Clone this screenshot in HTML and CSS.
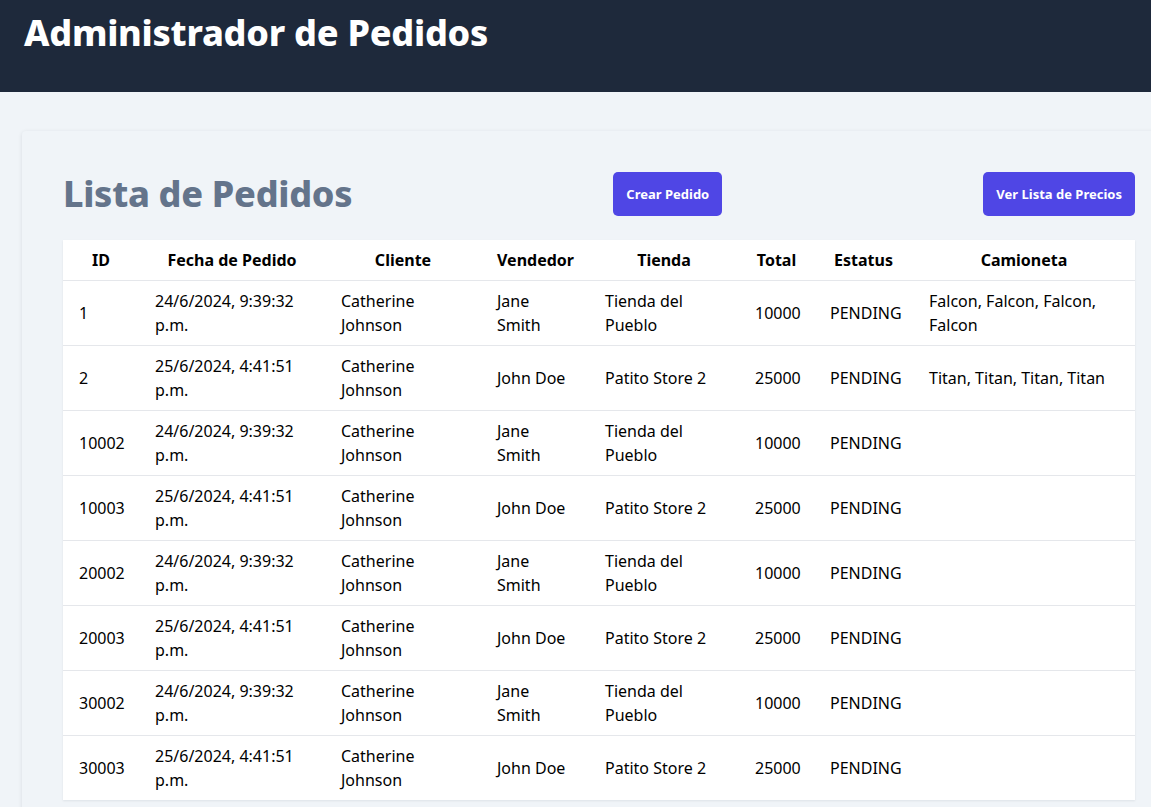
FILE: index.html
```html
<!DOCTYPE html>
<html lang="es">
<head>
<meta charset="utf-8">
<title>Administrador de Pedidos</title>
<link rel="stylesheet" href="styles.css">
</head>
<body>
<header class="topbar">
  <h1 class="app-title">Administrador de Pedidos</h1>
</header>
<main class="card">
  <div class="card-head">
    <h2 class="list-title">Lista de Pedidos</h2>
    <button class="btn">Crear Pedido</button>
    <button class="btn">Ver Lista de Precios</button>
  </div>
  <table class="orders">
    <colgroup>
      <col class="c-id"><col class="c-fecha"><col class="c-cliente"><col class="c-vend"><col class="c-tienda"><col class="c-total"><col class="c-estatus"><col class="c-cam">
    </colgroup>
    <thead>
      <tr><th>ID</th><th>Fecha de Pedido</th><th>Cliente</th><th>Vendedor</th><th>Tienda</th><th>Total</th><th>Estatus</th><th>Camioneta</th></tr>
    </thead>
    <tbody>
      <tr><td>1</td><td>24/6/2024, 9:39:32 p.m.</td><td>Catherine Johnson</td><td>Jane Smith</td><td>Tienda del Pueblo</td><td>10000</td><td>PENDING</td><td>Falcon, Falcon, Falcon, Falcon</td></tr>
      <tr><td>2</td><td>25/6/2024, 4:41:51 p.m.</td><td>Catherine Johnson</td><td>John Doe</td><td>Patito Store 2</td><td>25000</td><td>PENDING</td><td>Titan, Titan, Titan, Titan</td></tr>
      <tr><td>10002</td><td>24/6/2024, 9:39:32 p.m.</td><td>Catherine Johnson</td><td>Jane Smith</td><td>Tienda del Pueblo</td><td>10000</td><td>PENDING</td><td></td></tr>
      <tr><td>10003</td><td>25/6/2024, 4:41:51 p.m.</td><td>Catherine Johnson</td><td>John Doe</td><td>Patito Store 2</td><td>25000</td><td>PENDING</td><td></td></tr>
      <tr><td>20002</td><td>24/6/2024, 9:39:32 p.m.</td><td>Catherine Johnson</td><td>Jane Smith</td><td>Tienda del Pueblo</td><td>10000</td><td>PENDING</td><td></td></tr>
      <tr><td>20003</td><td>25/6/2024, 4:41:51 p.m.</td><td>Catherine Johnson</td><td>John Doe</td><td>Patito Store 2</td><td>25000</td><td>PENDING</td><td></td></tr>
      <tr><td>30002</td><td>24/6/2024, 9:39:32 p.m.</td><td>Catherine Johnson</td><td>Jane Smith</td><td>Tienda del Pueblo</td><td>10000</td><td>PENDING</td><td></td></tr>
      <tr><td>30003</td><td>25/6/2024, 4:41:51 p.m.</td><td>Catherine Johnson</td><td>John Doe</td><td>Patito Store 2</td><td>25000</td><td>PENDING</td><td></td></tr>
    </tbody>
  </table>
</main>
</body>
</html>
```
FILE: styles.css
```css
html {
  overflow: hidden;
}
body {
  margin: 0;
  background: #f0f4f8;
  font-family: "Noto Sans", "Open Sans", sans-serif;
  color: #000;
}
.topbar {
  background: #1e293b;
  height: 92px;
  box-sizing: border-box;
  padding: 13px 24px 0;
}
.app-title {
  margin: 0;
  color: #fff;
  font-size: 36px;
  line-height: 40px;
  font-weight: 800;
  letter-spacing: -0.25px;
}
.card {
  display: block;
  margin: 39px 0 0 22px;
  width: 1072px;
  padding: 41px 41px 40px;
  background: #f0f4f8;
  border-radius: 4px;
  box-shadow: 0 1px 4px rgba(15, 23, 42, 0.10);
}
.card-head {
  display: flex;
  align-items: center;
  justify-content: space-between;
  margin-bottom: 24px;
}
.list-title {
  margin: 0;
  color: #64748b;
  font-size: 36px;
  line-height: 40px;
  font-weight: 800;
  letter-spacing: -0.3px;
}
.btn {
  background: #4f46e5;
  color: #fff;
  border: none;
  border-radius: 5px;
  font-family: inherit;
  font-size: 13px;
  line-height: 20px;
  font-weight: 700;
  padding: 12px 13px;
}
.orders {
  width: 1072px;
  table-layout: fixed;
  border-collapse: collapse;
  background: #fff;
  box-shadow: 0 1px 2px rgba(15, 23, 42, 0.08);
  font-size: 16px;
  line-height: 24px;
}
.c-id { width: 76px; }
.c-fecha { width: 186px; }
.c-cliente { width: 156px; }
.c-vend { width: 108px; }
.c-tienda { width: 150px; }
.c-total { width: 75px; }
.c-estatus { width: 99px; }
.c-cam { width: 222px; }
.orders th {
  padding: 8px 16px;
  font-weight: 700;
  text-align: center;
  border-bottom: 1px solid #e5e7eb;
}
.orders td {
  padding: 8px 16px;
  text-align: left;
  vertical-align: middle;
  border-bottom: 1px solid #e5e7eb;
}
.orders tbody tr:last-child td {
  border-bottom: none;
}
```
